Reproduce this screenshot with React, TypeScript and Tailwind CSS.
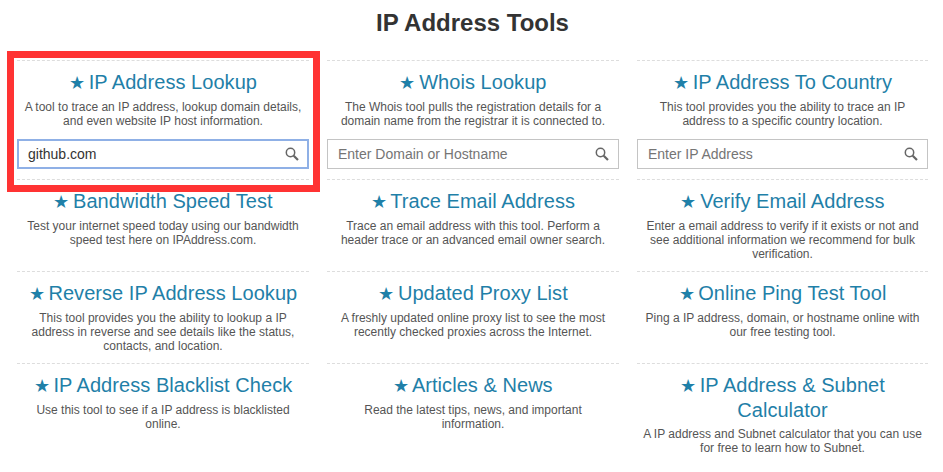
import React from "react";

type Tool = {
  title: React.ReactNode;
  desc: React.ReactNode;
  input?: string;
  value?: string;
};

const tools: Tool[] = [
  {
    title: "IP Address Lookup",
    desc: (
      <>
        A tool to trace an IP address, lookup domain details,
        <br />
        and even website IP host information.
      </>
    ),
    value: "github.com",
  },
  {
    title: "Whois Lookup",
    desc: (
      <>
        The Whois tool pulls the registration details for a
        <br />
        domain name from the registrar it is connected to.
      </>
    ),
    input: "Enter Domain or Hostname",
  },
  {
    title: "IP Address To Country",
    desc: (
      <>
        This tool provides you the ability to trace an IP
        <br />
        address to a specific country location.
      </>
    ),
    input: "Enter IP Address",
  },
  {
    title: "Bandwidth Speed Test",
    desc: (
      <>
        Test your internet speed today using our bandwidth
        <br />
        speed test here on IPAddress.com.
      </>
    ),
  },
  {
    title: "Trace Email Address",
    desc: (
      <>
        Trace an email address with this tool. Perform a
        <br />
        header trace or an advanced email owner search.
      </>
    ),
  },
  {
    title: "Verify Email Address",
    desc: (
      <>
        Enter a email address to verify if it exists or not and
        <br />
        see additional information we recommend for bulk
        <br />
        verification.
      </>
    ),
  },
  {
    title: "Reverse IP Address Lookup",
    desc: (
      <>
        This tool provides you the ability to lookup a IP
        <br />
        address in reverse and see details like the status,
        <br />
        contacts, and location.
      </>
    ),
  },
  {
    title: "Updated Proxy List",
    desc: (
      <>
        A freshly updated online proxy list to see the most
        <br />
        recently checked proxies across the Internet.
      </>
    ),
  },
  {
    title: "Online Ping Test Tool",
    desc: (
      <>
        Ping a IP address, domain, or hostname online with
        <br />
        our free testing tool.
      </>
    ),
  },
  {
    title: "IP Address Blacklist Check",
    desc: (
      <>
        Use this tool to see if a IP address is blacklisted
        <br />
        online.
      </>
    ),
  },
  {
    title: "Articles & News",
    desc: (
      <>
        Read the latest tips, news, and important
        <br />
        information.
      </>
    ),
  },
  {
    title: (
      <>
        IP Address &amp; Subnet
        <br />
        Calculator
      </>
    ),
    desc: (
      <>
        A IP address and Subnet calculator that you can use
        <br />
        for free to learn how to Subnet.
      </>
    ),
  },
];

const SearchIcon = () => (
  <svg
    width="14"
    height="14"
    viewBox="0 0 14 14"
    fill="none"
    stroke="#666666"
    className="shrink-0"
  >
    <circle cx="5.5" cy="5.5" r="4.2" strokeWidth="1.5" />
    <path d="M8.7 8.7 L13 13" strokeWidth="2.2" />
  </svg>
);

const ToolCell = ({ tool }: { tool: Tool }) => {
  const hasInput = tool.input || tool.value;
  return (
    <div className="border-t border-dashed border-[#dddddd] pt-[9px] pb-[10px] text-center">
      <h3 className="text-[20px] leading-[24px] font-normal tracking-[0.05px] text-[#1f80a8]">
        <span className="mr-[-2px] text-[18px]">★</span> {tool.title}
      </h3>
      <p className="mt-[5px] text-[12px] leading-[14px] text-[#555555]">
        {tool.desc}
      </p>
      {hasInput && (
        <div
          className={
            tool.value
              ? "mt-[11px] flex h-[30px] items-center justify-between border-2 border-[#8fb0e6] pr-[8px] pl-[9px]"
              : "mt-[11px] flex h-[30px] items-center justify-between border border-[#c4c4c4] pr-[9px] pl-[10px]"
          }
        >
          <span
            className={
              tool.value
                ? "text-[14px] text-[#333333]"
                : "text-[14px] text-[#757575]"
            }
          >
            {tool.value || tool.input}
          </span>
          <SearchIcon />
        </div>
      )}
    </div>
  );
};

export default function App() {
  return (
    <div className="relative h-[472px] w-[943px] overflow-hidden bg-white font-['Liberation_Sans',Arial,sans-serif]">
      <h1 className="pt-[9px] pb-[23px] pl-[2px] text-center text-[24px] leading-[28px] font-bold text-[#333333]">
        IP Address Tools
      </h1>
      <div className="grid grid-cols-[292px_292px_291px] gap-x-[18px] pl-[17px]">
        {tools.map((tool, i) => (
          <ToolCell key={i} tool={tool} />
        ))}
      </div>
      {/* red annotation box drawn over the first tool */}
      <div className="absolute top-[51px] left-[7px] h-[141px] w-[313px] border-[7px] border-[#ff3333]" />
    </div>
  );
}
